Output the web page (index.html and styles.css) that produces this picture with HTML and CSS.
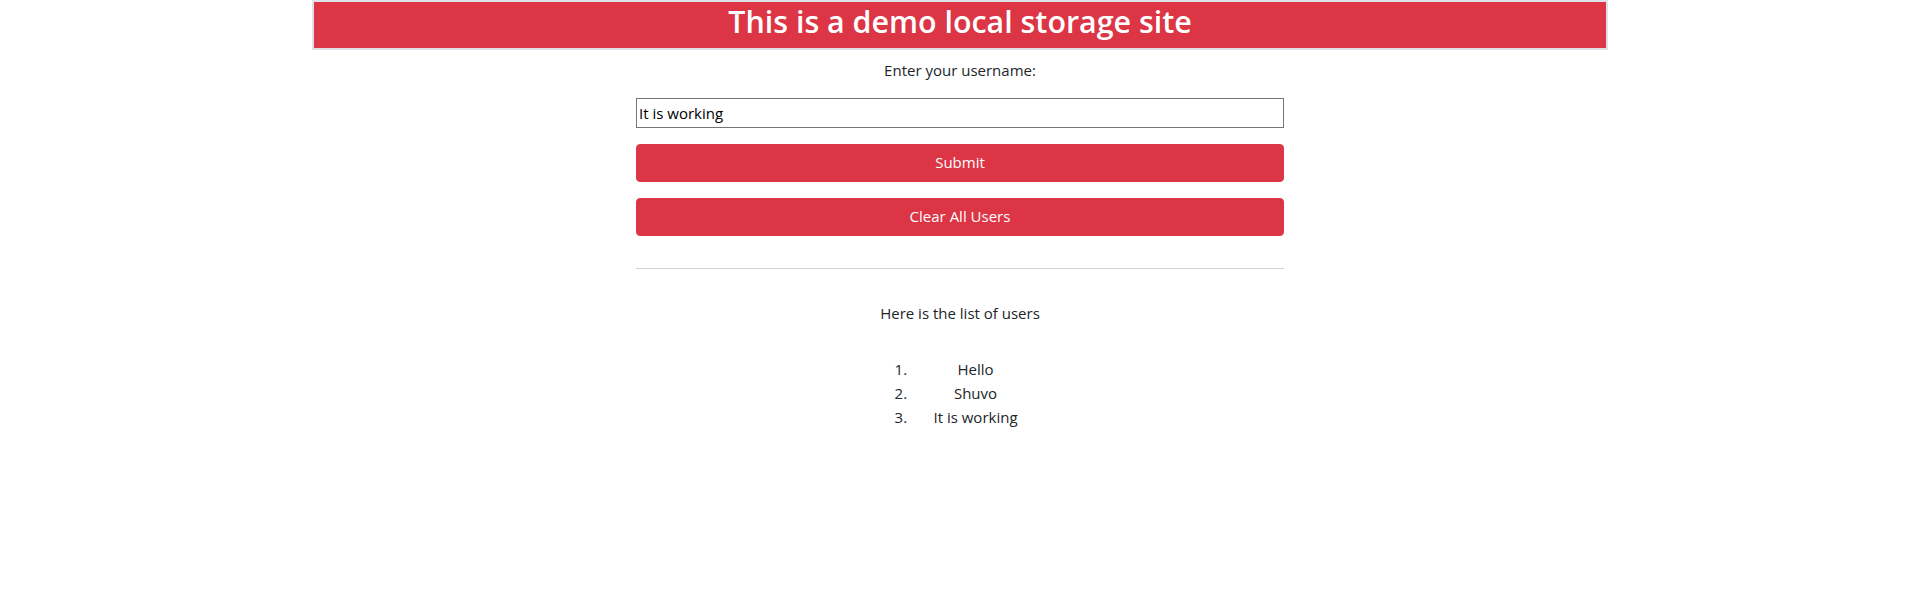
FILE: index.html
```html
<!DOCTYPE html>
<html lang="en">
<head>
<meta charset="utf-8">
<title>Local Storage Demo</title>
<link rel="stylesheet" href="styles.css">
</head>
<body>
<header class="banner">
  <h2 class="banner-title">This is a demo local storage site</h2>
</header>
<main class="panel">
  <label class="field-label" for="username">Enter your username:</label>
  <input class="field-input" id="username" type="text" value="It is working">
  <button class="btn" type="button">Submit</button>
  <button class="btn" type="button">Clear All Users</button>
  <hr class="divider">
  <p class="list-title">Here is the list of users</p>
  <ol class="user-list">
    <li>Hello</li>
    <li>Shuvo</li>
    <li>It is working</li>
  </ol>
</main>
</body>
</html>
```
FILE: styles.css
```css
* { box-sizing: border-box; }
html, body { margin: 0; padding: 0; background: #fff; }
body {
  font-family: "Open Sans", "Noto Sans", sans-serif;
  font-size: 15px;
  line-height: 24px;
  color: #212529;
}
.banner {
  width: 1296px;
  margin: 0 auto;
  border: 2px solid #dee2e6;
  background: #dc3545;
  height: 50px;
}
.banner-title {
  margin: 0;
  color: #fff;
  font-size: 30.4px;
  font-weight: 600;
  line-height: 39px;
  padding-bottom: 7px;
  text-align: center;
}
.panel {
  width: 648px;
  margin: 0 auto;
  display: flex;
  flex-direction: column;
  align-items: stretch;
}
.field-label {
  display: block;
  text-align: center;
  margin-top: 8px;
  height: 24px;
  margin-bottom: 16px;
}
.field-input {
  display: block;
  width: 100%;
  height: 30px;
  margin: 0 0 16px;
  padding: 1px 2px;
  border: 1px solid #767676;
  border-radius: 0;
  font-family: "Open Sans", "Noto Sans", sans-serif;
  font-size: 15px;
  color: #000;
  background: #fff;
}
.btn {
  display: block;
  width: 100%;
  height: 38px;
  margin: 0 0 16px;
  padding: 0 0 2px;
  border: 1px solid #dc3545;
  border-radius: 4px;
  background: #dc3545;
  color: #fff;
  font-family: "Open Sans", "Noto Sans", sans-serif;
  font-size: 15px;
  line-height: 24px;
  text-align: center;
}
.divider {
  width: 100%;
  margin: 16px 0 32px;
  border: 0;
  border-top: 1px solid #d2d2d2;
  height: 0;
}
.list-title {
  margin: 0 0 32px;
  text-align: center;
}
.user-list {
  width: 129px;
  padding: 0 0 0 31px;
  box-sizing: content-box;
  margin: 0 auto;
}
.user-list li {
  text-align: center;
}
```
